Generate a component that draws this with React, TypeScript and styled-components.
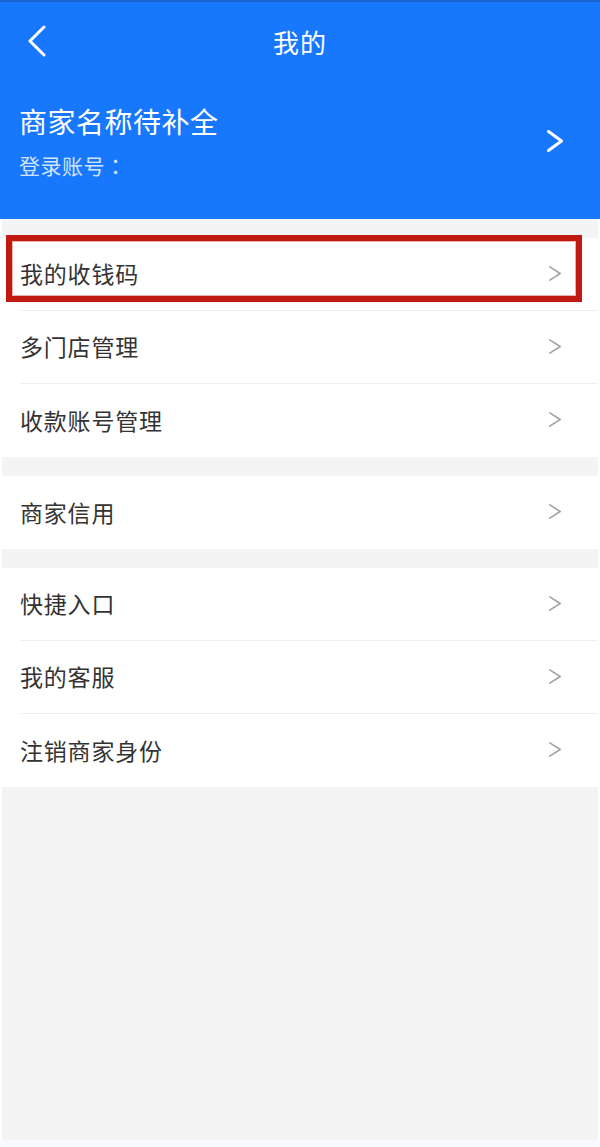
import React from "react";
import styled, { createGlobalStyle } from "styled-components";

const GlobalStyle = createGlobalStyle`
  html, body {
    margin: 0;
    padding: 0;
    background: #ffffff;
  }
  body {
    font-family: "Noto Sans CJK SC", "Noto Sans", sans-serif;
  }
  * { box-sizing: border-box; }
`;

const Page = styled.div`
  width: 600px;
  min-height: 1147px;
  display: flex;
  flex-direction: column;
  background: #ffffff;
`;

const Header = styled.header`
  background: #1778fe;
  border-top: 2px solid #1a62cc;
  display: flex;
  flex-direction: column;
`;

const NavBar = styled.div`
  position: relative;
  height: 80px;
  display: flex;
  align-items: center;
  justify-content: center;
`;

const BackButton = styled.button`
  position: absolute;
  left: 26px;
  top: 23px;
  width: 22px;
  height: 32px;
  padding: 0;
  border: none;
  background: transparent;
  display: flex;
  align-items: center;
  justify-content: center;
`;

const Title = styled.h1`
  margin: 0;
  font-size: 26px;
  font-weight: 400;
  color: #ffffff;
  line-height: 36px;
  letter-spacing: 1px;
`;

const Profile = styled.div`
  display: flex;
  align-items: center;
  justify-content: space-between;
  padding: 20px 36px 39px 19px;
`;

const ProfileText = styled.div`
  display: flex;
  flex-direction: column;
  gap: 10px;
`;

const MerchantName = styled.div`
  font-size: 28px;
  line-height: 38px;
  color: #ffffff;
  letter-spacing: 0.5px;
`;

const Account = styled.div`
  font-family: "Noto Sans CJK TC", "Noto Sans CJK SC", sans-serif;
  font-size: 21px;
  line-height: 30px;
  color: rgba(255, 255, 255, 0.82);
  letter-spacing: 0.5px;
`;

const Content = styled.main`
  flex: 1;
  display: flex;
  flex-direction: column;
  background: #f4f4f4;
  margin: 0 2px;
  padding-top: 19px;
  gap: 19px;
`;

const Group = styled.section`
  background: #ffffff;
  display: flex;
  flex-direction: column;
`;

const Row = styled.div`
  position: relative;
  height: 73px;
  padding-left: 18px;
  display: flex;
`;

const RowInner = styled.div<{ $last?: boolean }>`
  flex: 1;
  display: flex;
  align-items: center;
  justify-content: space-between;
  padding-right: 36px;
  padding-bottom: 2px;
  border-bottom: ${(p) => (p.$last ? "none" : "1px solid #efefef")};
`;

const RowLabel = styled.span`
  font-size: 23px;
  color: #333333;
  letter-spacing: 0.8px;
`;

const Highlight = styled.div`
  position: absolute;
  left: 4px;
  top: -3px;
  width: 576px;
  height: 67px;
  border: 6px solid #c0190f;
  box-shadow: inset 0 0 0 1px rgba(230, 120, 110, 0.6);
  pointer-events: none;
`;

const Spacer = styled.div`
  flex: 1;
`;

const BottomStrip = styled.div`
  height: 7px;
  background: #f8faff;
`;

const Chevron = ({ color, w, h, sw }: { color: string; w: number; h: number; sw: number }) => (
  <svg width={w} height={h} viewBox={`0 0 ${w} ${h}`} fill="none">
    <polyline
      points={`${sw / 2 + 1},${sw / 2 + 1} ${w - sw / 2 - 1},${h / 2} ${sw / 2 + 1},${h - sw / 2 - 1}`}
      stroke={color}
      strokeWidth={sw}
      strokeLinecap="round"
      strokeLinejoin="round"
    />
  </svg>
);

const BackIcon = () => (
  <svg width="20" height="32" viewBox="0 0 20 32" fill="none">
    <polyline points="17,2 3,16 17,30" stroke="#ffffff" strokeWidth="3" strokeLinecap="round" strokeLinejoin="round" />
  </svg>
);

type Item = { label: string; highlight?: boolean };

const groups: Item[][] = [
  [{ label: "我的收钱码", highlight: true }, { label: "多门店管理" }, { label: "收款账号管理" }],
  [{ label: "商家信用" }],
  [{ label: "快捷入口" }, { label: "我的客服" }, { label: "注销商家身份" }],
];

export default function App() {
  return (
    <>
      <GlobalStyle />
      <Page>
        <Header>
          <NavBar>
            <BackButton aria-label="返回">
              <BackIcon />
            </BackButton>
            <Title>我的</Title>
          </NavBar>
          <Profile>
            <ProfileText>
              <MerchantName>商家名称待补全</MerchantName>
              <Account>登录账号：</Account>
            </ProfileText>
            <Chevron color="#ffffff" w={18} h={24} sw={3} />
          </Profile>
        </Header>
        <Content>
          {groups.map((g, gi) => (
            <Group key={gi}>
              {g.map((item, i) => (
                <Row key={item.label}>
                  <RowInner $last={i === g.length - 1}>
                    <RowLabel>{item.label}</RowLabel>
                    <Chevron color="#a3a3a3" w={14} h={17} sw={1.6} />
                  </RowInner>
                  {item.highlight && <Highlight />}
                </Row>
              ))}
            </Group>
          ))}
          <Spacer />
        </Content>
        <BottomStrip />
      </Page>
    </>
  );
}
